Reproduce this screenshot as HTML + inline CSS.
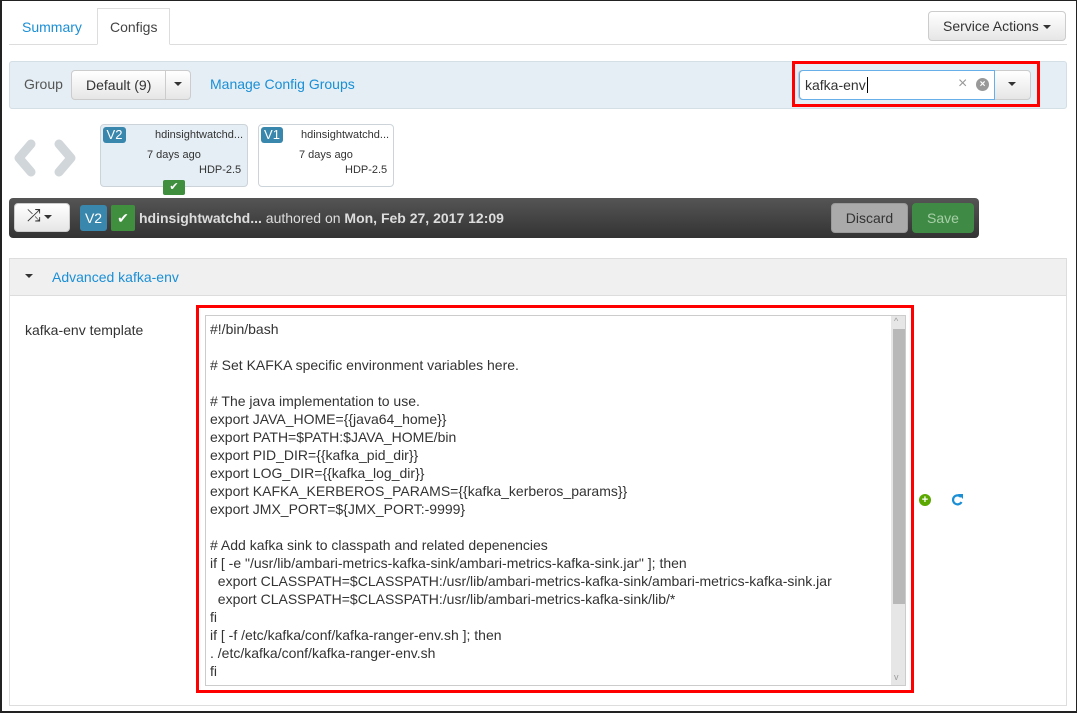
<!DOCTYPE html>
<html><head><style>
*{box-sizing:border-box;margin:0;padding:0}
body{width:1077px;height:713px;overflow:hidden;font-family:"Liberation Sans",sans-serif;font-size:14px;color:#333;background:#fff;position:relative}
.a{position:absolute}
.frame{left:0;top:0;width:1077px;height:713px;border:1px solid #222;border-left-width:2px;border-bottom-width:2px}
.btn{position:absolute;background:linear-gradient(#fff,#e6e6e6);border:1px solid #ccc;border-radius:4px}
.caret{display:inline-block;width:0;height:0;border-left:4px solid transparent;border-right:4px solid transparent;border-top:4px solid #333;vertical-align:2px}
.card{position:absolute;border:1px solid #ccd4da;border-radius:4px;font-size:11px;color:#333}
.badge{position:absolute;background:#3a87ad;color:#fff;border-radius:3px;font-size:13px;text-align:center}
pre{font-family:"Liberation Sans",sans-serif;font-size:14px;line-height:18px;color:#333}
</style></head><body>
<div class="a frame"></div>
<div class="a" style="left:9px;top:44px;width:1058px;height:1px;background:#ddd"></div>
<div class="a" style="left:22px;top:19px;color:#1a8fd6">Summary</div>
<div class="a" style="left:97px;top:8px;width:73px;height:37px;border:1px solid #ddd;border-bottom-color:#fff;background:#fff"></div>
<div class="a" style="left:110px;top:19px;color:#444">Configs</div>
<div class="btn" style="left:928px;top:11px;width:138px;height:30px;"></div>
<div class="a" style="left:943px;top:18px;color:#333">Service Actions <span class="caret"></span></div>

<div class="a" style="left:9px;top:61px;width:1058px;height:48px;background:#e4eef4;border:1px solid #d3dee5;border-radius:3px"></div>
<div class="a" style="left:24px;top:76px;color:#555">Group</div>
<div class="btn" style="left:71px;top:70px;width:120px;height:30px"></div>
<div class="a" style="left:165px;top:71px;width:1px;height:28px;background:#ccc"></div>
<div class="a" style="left:86px;top:77px">Default (9)</div>
<div class="a" style="left:174px;top:75px"><span class="caret"></span></div>
<div class="a" style="left:210px;top:76px;color:#1a8fd6">Manage Config Groups</div>
<div class="a" style="left:792px;top:61px;width:248px;height:46px;border:3px solid #f00"></div>
<div class="btn" style="left:798px;top:70px;width:233px;height:30px"></div>
<div class="a" style="left:799px;top:70px;width:196px;height:30px;background:#fff;border:1px solid #66afe9;border-radius:4px 0 0 4px"></div>
<div class="a" style="left:805px;top:77px;color:#333">kafka-env<span style="border-left:1px solid #000;margin-left:1px"></span></div>
<div class="a" style="left:958px;top:75px;color:#999;font-size:16px">×</div>
<div class="a" style="left:976px;top:78px;width:13px;height:13px;border-radius:50%;background:#999;color:#fff;font-size:10px;line-height:13px;text-align:center;font-weight:bold">×</div>
<div class="a" style="left:1008px;top:75px"><span class="caret"></span></div>

<svg class="a" style="left:10px;top:138px" width="75" height="40"><path d="M21 6 L9 20 L21 34" stroke="#d0d6da" stroke-width="9" fill="none" stroke-linecap="round" stroke-linejoin="round"/><path d="M49 6 L61 20 L49 34" stroke="#d0d6da" stroke-width="9" fill="none" stroke-linecap="round" stroke-linejoin="round"/></svg>
<div class="card" style="left:100px;top:124px;width:148px;height:63px;background:#e4eef4"></div>
<div class="badge" style="left:103px;top:127px;width:23px;height:16px;line-height:16px">V2</div>
<div class="a" style="left:155px;top:129px;font-size:11px">hdinsightwatchd...</div>
<div class="a" style="left:147px;top:149px;font-size:11px">7 days ago</div>
<div class="a" style="left:199px;top:164px;font-size:11px">HDP-2.5</div>
<div class="a" style="left:163px;top:180px;width:22px;height:15px;background:#3f8f3f;border-radius:2px;color:#fff;font-size:11px;text-align:center;line-height:15px">✔</div>
<div class="card" style="left:258px;top:124px;width:136px;height:63px;background:#fff"></div>
<div class="badge" style="left:261px;top:127px;width:22px;height:16px;line-height:16px">V1</div>
<div class="a" style="left:301px;top:129px;font-size:11px">hdinsightwatchd...</div>
<div class="a" style="left:299px;top:149px;font-size:11px">7 days ago</div>
<div class="a" style="left:345px;top:164px;font-size:11px">HDP-2.5</div>

<div class="a" style="left:9px;top:198px;width:970px;height:40px;background:linear-gradient(#555,#333);border-radius:4px"></div>
<div class="btn" style="left:14px;top:203px;width:56px;height:29px"></div>
<div class="a" style="left:27px;top:206px;font-size:17px;color:#333">⤮<span class="caret" style="margin-left:3px"></span></div>
<div class="badge" style="left:80px;top:205px;width:27px;height:26px;line-height:26px;font-size:14px">V2</div>
<div class="a" style="left:111px;top:205px;width:24px;height:26px;background:#3f8f3f;border-radius:2px;color:#fff;text-align:center;line-height:26px">✔</div>
<div class="a" style="left:139px;top:210px;color:#ddd"><b>hdinsightwatchd...</b> authored on <b>Mon, Feb 27, 2017 12:09</b></div>
<div class="a" style="left:831px;top:203px;width:77px;height:30px;background:#aaa;border:1px solid #999;border-radius:4px;color:#333;text-align:center;line-height:28px">Discard</div>
<div class="a" style="left:912px;top:203px;width:62px;height:30px;background:#3f8a45;border-radius:4px;color:#a8cfa8;text-align:center;line-height:30px">Save</div>

<div class="a" style="left:9px;top:258px;width:1058px;height:448px;border:1px solid #ddd"></div>
<div class="a" style="left:10px;top:259px;width:1056px;height:37px;background:#f0f0f0;border-bottom:1px solid #ddd"></div>
<div class="a" style="left:25px;top:267px"><span class="caret"></span></div>
<div class="a" style="left:52px;top:269px;color:#1a8fd6">Advanced kafka-env</div>
<div class="a" style="left:25px;top:322px">kafka-env template</div>
<div class="a" style="left:196px;top:305px;width:718px;height:388px;border:3px solid #f00"></div>
<div class="a" style="left:205px;top:315px;width:701px;height:371px;border:1px solid #ccc;background:#fff"></div>
<div class="a" style="left:891px;top:316px;width:14px;height:369px;background:#e6e6e6"></div>
<div class="a" style="left:893px;top:329px;width:12px;height:275px;background:#b8b8b8"></div>
<div class="a" style="left:894px;top:316px;font-size:9px;color:#999">^</div>
<div class="a" style="left:894px;top:672px;font-size:9px;color:#999">v</div>
<pre class="a" style="left:210px;top:320px">#!/bin/bash

# Set KAFKA specific environment variables here.

# The java implementation to use.
export JAVA_HOME={{java64_home}}
export PATH=$PATH:$JAVA_HOME/bin
export PID_DIR={{kafka_pid_dir}}
export LOG_DIR={{kafka_log_dir}}
export KAFKA_KERBEROS_PARAMS={{kafka_kerberos_params}}
export JMX_PORT=${JMX_PORT:-9999}

# Add kafka sink to classpath and related depenencies
if [ -e "/usr/lib/ambari-metrics-kafka-sink/ambari-metrics-kafka-sink.jar" ]; then
  export CLASSPATH=$CLASSPATH:/usr/lib/ambari-metrics-kafka-sink/ambari-metrics-kafka-sink.jar
  export CLASSPATH=$CLASSPATH:/usr/lib/ambari-metrics-kafka-sink/lib/*
fi
if [ -f /etc/kafka/conf/kafka-ranger-env.sh ]; then
. /etc/kafka/conf/kafka-ranger-env.sh
fi</pre>
<div class="a" style="left:919px;top:494px;width:12px;height:12px;border-radius:50%;background:#5aa800;color:#fff;font-size:11px;font-weight:bold;line-height:12px;text-align:center">+</div>
<svg class="a" style="left:951px;top:493px" width="13" height="13"><path d="M10 4 A4.5 4.5 0 1 0 10.5 9" stroke="#1a8fd6" stroke-width="2.2" fill="none"/><path d="M7 1 L12 1 L12 6 Z" fill="#1a8fd6"/></svg>
</body></html>
